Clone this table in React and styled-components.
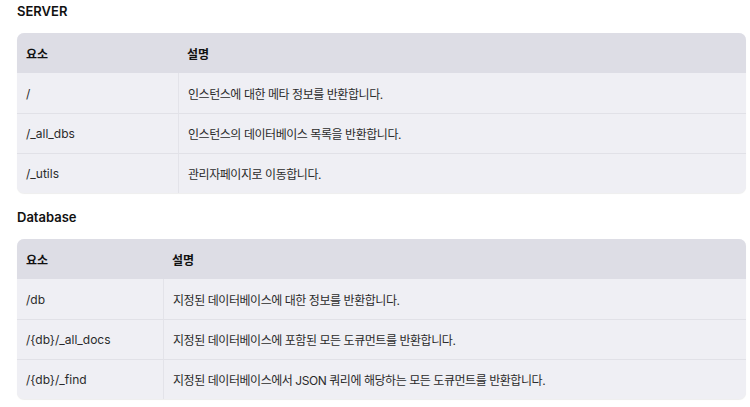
import React from 'react'
import styled, { createGlobalStyle } from 'styled-components'

const GlobalStyle = createGlobalStyle`
  body {
    margin: 0;
    background: #ffffff;
    font-family: Inter, "Noto Sans CJK KR", sans-serif;
  }
`

const Page = styled.div`
  padding: 3px 4px 0 17px;
  display: flex;
  flex-direction: column;
`

const Heading = styled.h3`
  margin: 0;
  height: 30px;
  font-size: 13px;
  font-weight: 600;
  color: #111;
  line-height: 16px;
`

const Table = styled.table`
  width: 100%;
  border-collapse: separate;
  border-spacing: 0;
  background: #efeff4;
  border-radius: 7px;
  box-shadow: 0 1px 1px rgba(0, 0, 0, 0.07);
  overflow: hidden;
  margin-bottom: 16px;
  font-size: 12px;
`

const HeadCell = styled.th`
  height: 40px;
  padding: 0 9px;
  text-align: left;
  background: #dddde5;
  font-weight: 700;
  color: #111;
  width: ${(p) => (p.$w ? `${p.$w}px` : 'auto')};
  box-sizing: border-box;
`

const Cell = styled.td`
  height: 40px;
  padding: 0 9px;
  color: #2b2b2b;
  border-top: ${(p) => (p.$first ? 'none' : '1px solid #e1e1e7')};
  border-left: ${(p) => (p.$desc ? '1px solid #e3e3e9' : 'none')};
  letter-spacing: ${(p) => (p.$desc ? '-0.45px' : 'normal')};
  box-sizing: border-box;
`

const sections = [
  {
    title: 'SERVER',
    col: 161,
    rows: [
      ['/', '인스턴스에 대한 메타 정보를 반환합니다.'],
      ['/_all_dbs', '인스턴스의 데이터베이스 목록을 반환합니다.'],
      ['/_utils', '관리자페이지로 이동합니다.'],
    ],
  },
  {
    title: 'Database',
    col: 146,
    rows: [
      ['/db', '지정된 데이터베이스에 대한 정보를 반환합니다.'],
      ['/{db}/_all_docs', '지정된 데이터베이스에 포함된 모든 도큐먼트를 반환합니다.'],
      ['/{db}/_find', '지정된 데이터베이스에서 JSON 쿼리에 해당하는 모든 도큐먼트를 반환합니다.'],
    ],
  },
]

export default function App() {
  return (
    <>
      <GlobalStyle />
      <Page>
        {sections.map((s) => (
          <React.Fragment key={s.title}>
            <Heading>{s.title}</Heading>
            <Table>
              <thead>
                <tr>
                  <HeadCell $w={s.col}>요소</HeadCell>
                  <HeadCell>설명</HeadCell>
                </tr>
              </thead>
              <tbody>
                {s.rows.map(([k, v], i) => (
                  <tr key={k}>
                    <Cell $first={i === 0}>{k}</Cell>
                    <Cell $first={i === 0} $desc>{v}</Cell>
                  </tr>
                ))}
              </tbody>
            </Table>
          </React.Fragment>
        ))}
      </Page>
    </>
  )
}
